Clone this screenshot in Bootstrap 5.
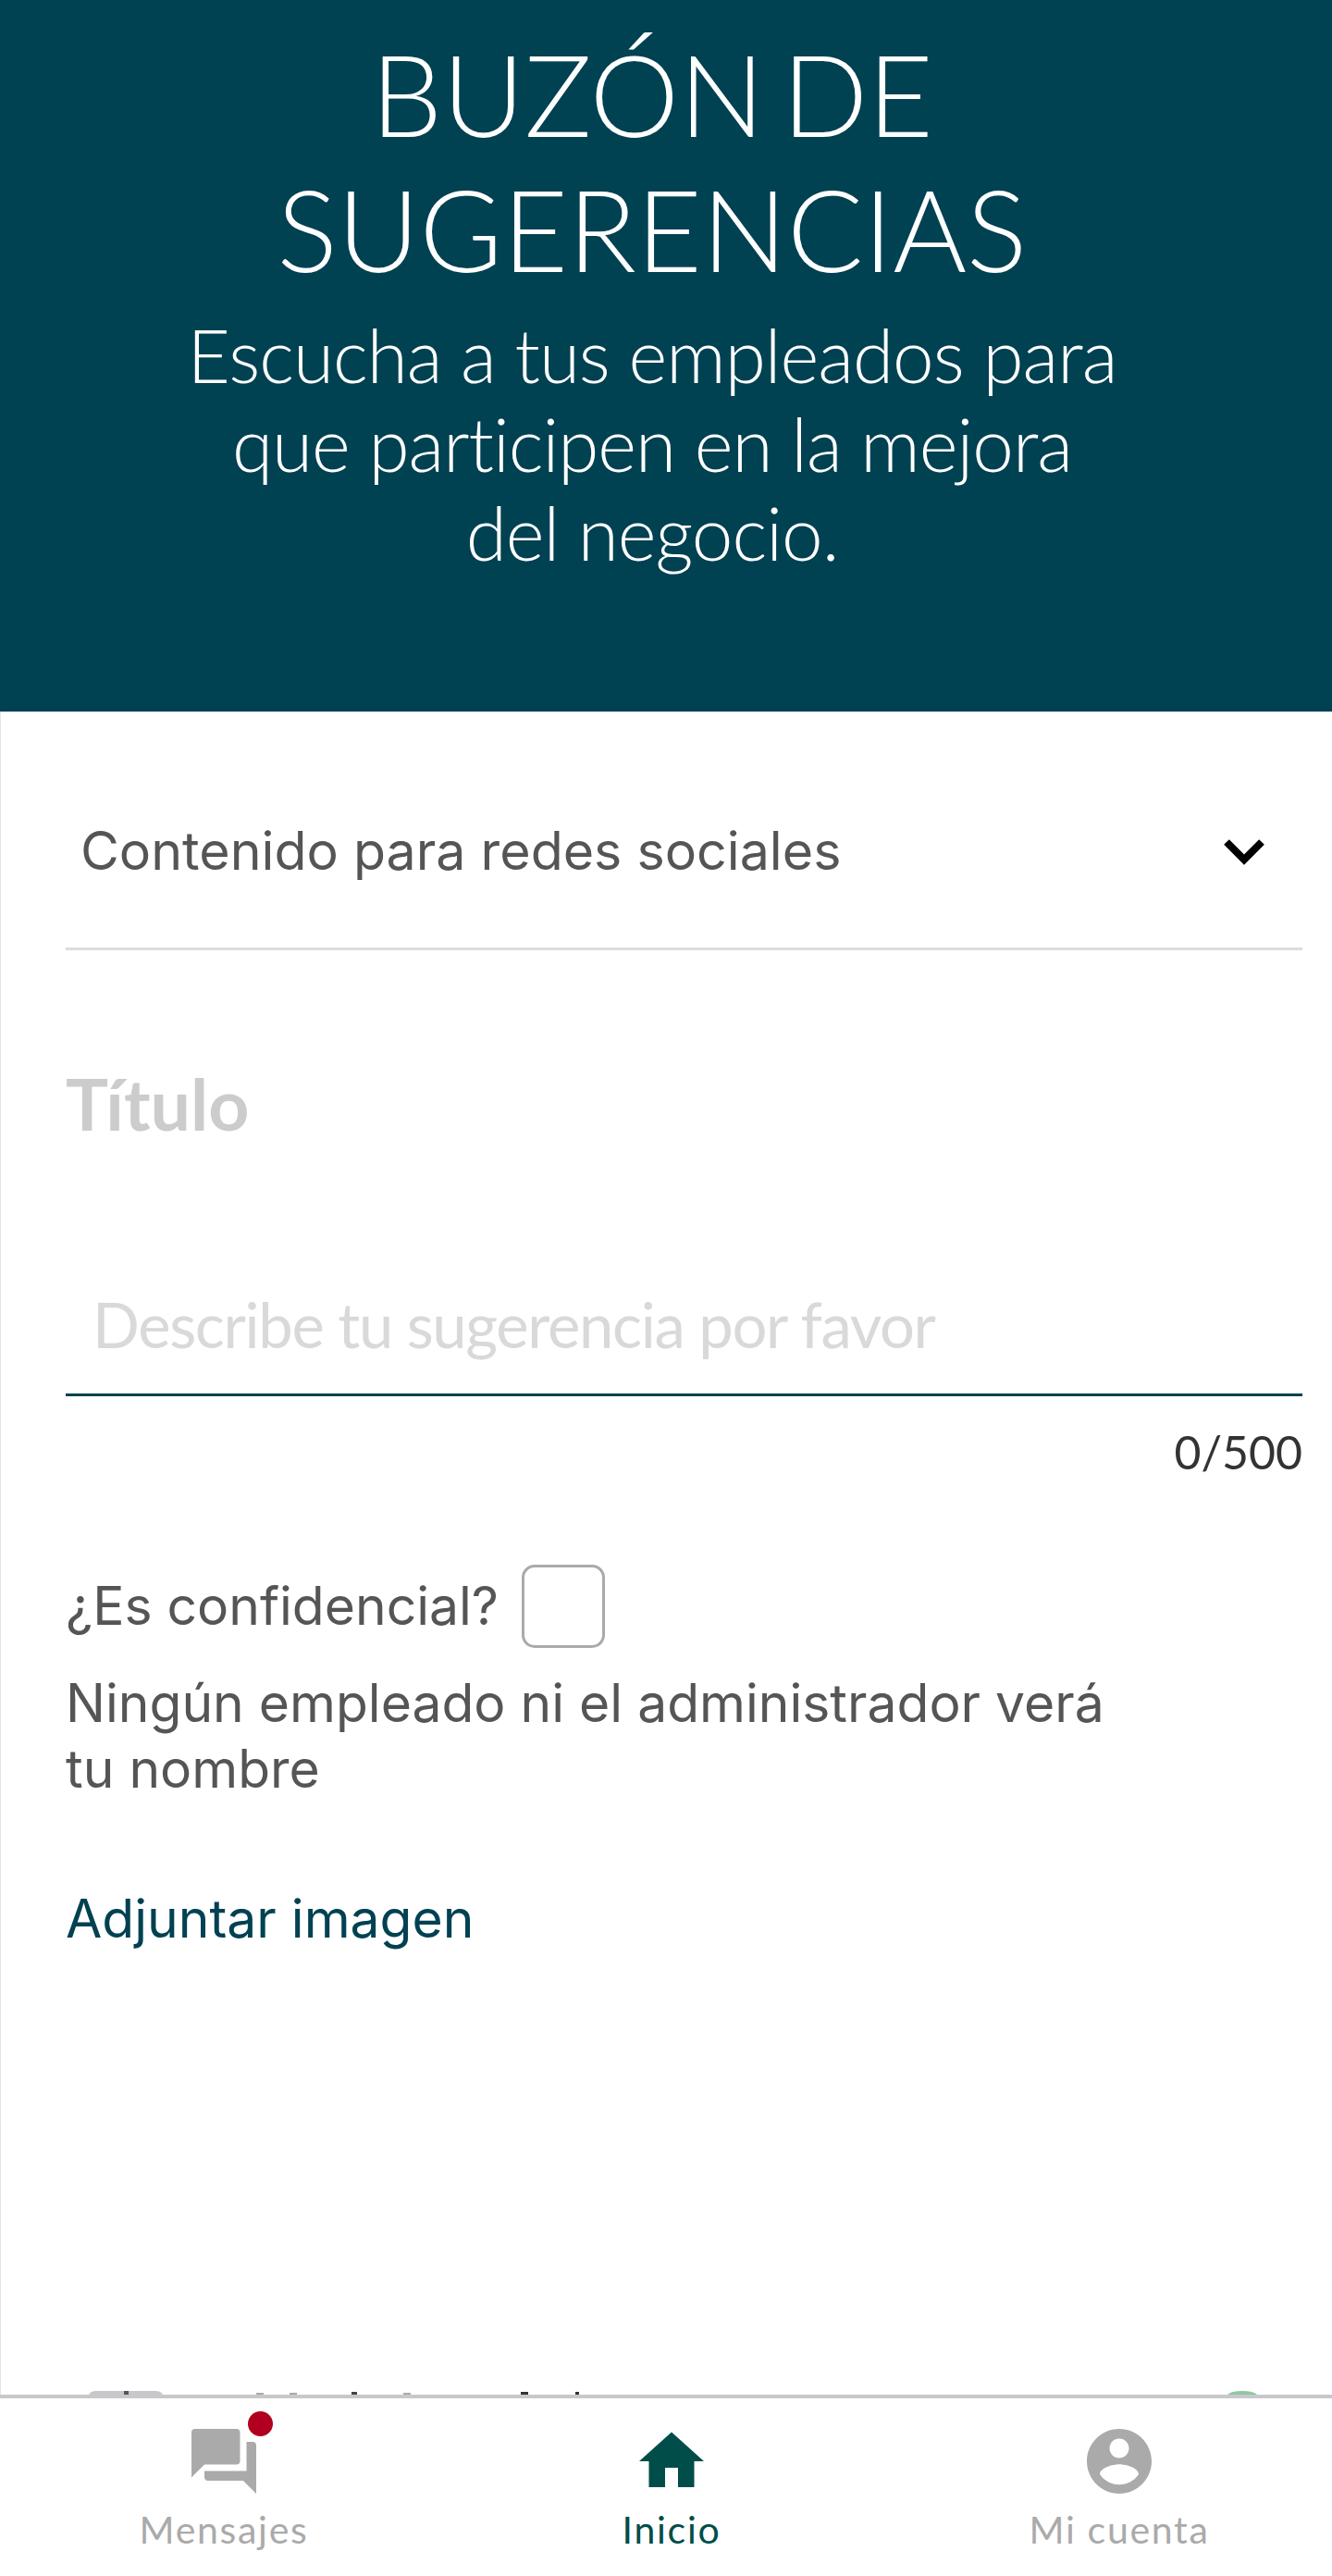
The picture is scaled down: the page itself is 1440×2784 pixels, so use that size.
<!DOCTYPE html>
<html lang="es">
<head>
    <meta charset="UTF-8">
    <meta name="viewport" content="width=device-width, initial-scale=1.0">
    <title>Buzón de sugerencias</title>

    <link rel="stylesheet" href="https://cdn.jsdelivr.net/npm/bootstrap@5.3.0/dist/css/bootstrap.min.css">

    <style>
        body {
            height: 2784px;
            overflow: hidden;
            background: #fff;
            font-family: Inter, "Liberation Sans", sans-serif;
        }
        .hero {
            height: 769px;
            background: #004152;
            color: #fff;
            font-family: Lato, sans-serif;
            font-weight: 300;
            padding: 28px 30px 0 0;
        }
        .hero h1 {
            font-size: 122px;
            line-height: 146px;
            font-weight: 300;
            word-spacing: -14px;
            margin: 0 0 15px;
        }
        .hero p {
            font-size: 80px;
            line-height: 96px;
            letter-spacing: -1px;
            margin: 0;
        }
        .form-area {
            height: 1819px;
            overflow: hidden;
            border-left: 1px solid #e4e4e4;
            padding: 0 32px 0 70px;
        }
        .select-row {
            height: 258px;
            padding: 100px 39px 0 16px;
            border-bottom: 3px solid #ddd;
            color: #555;
            font-size: 57.3px;
            line-height: 100px;
        }
        .title-text {
            margin-top: 120px;
            color: #ccc;
            font-family: Lato, sans-serif;
            font-weight: 700;
            font-size: 77px;
            line-height: 90px;
        }
        .desc-box {
            margin-top: 156px;
            height: 116px;
            padding-left: 29px;
            border-bottom: 3px solid #004152;
            color: #d9d9d9;
            font-family: Lato, sans-serif;
            font-size: 67px;
            letter-spacing: -1.35px;
            line-height: 76px;
        }
        .counter {
            margin-top: 30px;
            color: #333;
            font-family: Lato, sans-serif;
            font-size: 50px;
            line-height: 60px;
        }
        .conf-row {
            margin-top: 92px;
            gap: 25px;
            color: #555;
            font-size: 57px;
            line-height: 90px;
        }
        .conf-check {
            width: 90px;
            height: 90px;
            border: 3px solid #aaa;
            border-radius: 14px;
        }
        .conf-note {
            margin: 24px 0 0;
            color: #555;
            font-size: 57px;
            line-height: 71px;
        }
        .attach-link {
            display: block;
            margin-top: 91px;
            color: #004152;
            font-size: 57px;
            line-height: 71px;
            text-decoration: none;
        }
        .peek-row {
            display: block;
            flex-shrink: 0;
            margin-left: -71px;
            width: 1440px;
            height: 4px;
        }
        .bottom-bar {
            height: 196px;
            width: 1452px;
            border-top: 4px solid #c8c8cc;
            background: #fff;
            font-family: Lato, sans-serif;
            font-size: 41px;
            letter-spacing: 1.7px;
            line-height: 50px;
            color: #aaa;
        }
        .bar-item {
            width: 484px;
            padding-top: 26px;
        }
        .bar-item svg {
            width: 84px;
            height: 84px;
            fill: currentColor;
            display: block;
        }
        .bar-item.is-active {
            color: #004d4a;
        }
        .bar-label {
            margin-top: 7px;
        }
        .msg-dot {
            position: absolute;
            top: -12px;
            right: -11px;
            width: 27px;
            height: 27px;
            border-radius: 50%;
            background: #b1001f;
        }
    </style>
</head>
<body>

    <!-- Header -->
    <header class="hero text-center">
        <h1>BUZÓN DE<br>SUGERENCIAS</h1>
        <p>Escucha a tus empleados para<br>que participen en la mejora<br>del negocio.</p>
    </header>

    <!-- Form -->
    <main class="form-area d-flex flex-column">
        <div class="select-row d-flex justify-content-between align-items-start">
            <span>Contenido para redes sociales</span>
            <svg width="48" height="100" viewBox="0 0 48 100"><path d="M5 41l19 19 19-19" fill="none" stroke="#000" stroke-width="8"/></svg>
        </div>

        <div class="title-text">Título</div>
        <div class="desc-box">Describe tu sugerencia por favor</div>
        <div class="counter text-end">0/500</div>

        <div class="conf-row d-flex align-items-center">
            <span>¿Es confidencial?</span>
            <span class="conf-check"></span>
        </div>
        <p class="conf-note">Ningún empleado ni el administrador verá<br>tu nombre</p>
        <a class="attach-link" href="#">Adjuntar imagen</a>

        <!-- top edge of the next row, cut off by the bottom bar -->
        <svg class="peek-row mt-auto" viewBox="0 0 1440 4">
            <path d="M96 4q2-4 8-4h64q6 0 8 4z" fill="#c8c8cc"/>
            <rect x="134" y="0" width="5" height="4" fill="#555"/>
            <rect x="277" y="2" width="8" height="2" fill="#aaa"/>
            <rect x="313" y="2" width="8" height="2" fill="#aaa"/>
            <rect x="380" y="1" width="6" height="3" fill="#444"/>
            <rect x="436" y="2" width="8" height="2" fill="#aaa"/>
            <rect x="563" y="1" width="8" height="3" fill="#333"/>
            <rect x="622" y="1" width="4" height="3" fill="#333"/>
            <path d="M1327 4q4-4 16-4t16 4z" fill="#8cc8a0"/>
        </svg>
    </main>

    <!-- Bottom nav -->
    <nav class="bottom-bar d-flex">
        <div class="bar-item d-flex flex-column align-items-center">
            <div class="position-relative">
                <svg viewBox="0 0 24 24"><path d="M21 6h-2v9H6v2c0 .55.45 1 1 1h11l4 4V7c0-.55-.45-1-1-1zm-4 6V3c0-.55-.45-1-1-1H3c-.55 0-1 .45-1 1v14l4-4h10c.55 0 1-.45 1-1z"/></svg>
                <span class="msg-dot"></span>
            </div>
            <span class="bar-label">Mensajes</span>
        </div>
        <div class="bar-item is-active d-flex flex-column align-items-center">
            <svg viewBox="0 0 24 24"><path d="M10 20v-6h4v6h5v-8h3L12 3 2 12h3v8z"/></svg>
            <span class="bar-label">Inicio</span>
        </div>
        <div class="bar-item d-flex flex-column align-items-center">
            <svg viewBox="0 0 24 24"><path d="M12 2C6.48 2 2 6.48 2 12s4.48 10 10 10 10-4.48 10-10S17.52 2 12 2zm0 3c1.66 0 3 1.34 3 3s-1.34 3-3 3-3-1.34-3-3 1.34-3 3-3zm0 14.2c-2.5 0-4.71-1.28-6-3.22.03-1.99 4-3.08 6-3.08 1.99 0 5.97 1.09 6 3.08-1.29 1.94-3.5 3.22-6 3.22z"/></svg>
            <span class="bar-label">Mi cuenta</span>
        </div>
    </nav>

    <script src="https://cdn.jsdelivr.net/npm/bootstrap@5.3.0/dist/js/bootstrap.bundle.min.js"></script>
</body>
</html>
